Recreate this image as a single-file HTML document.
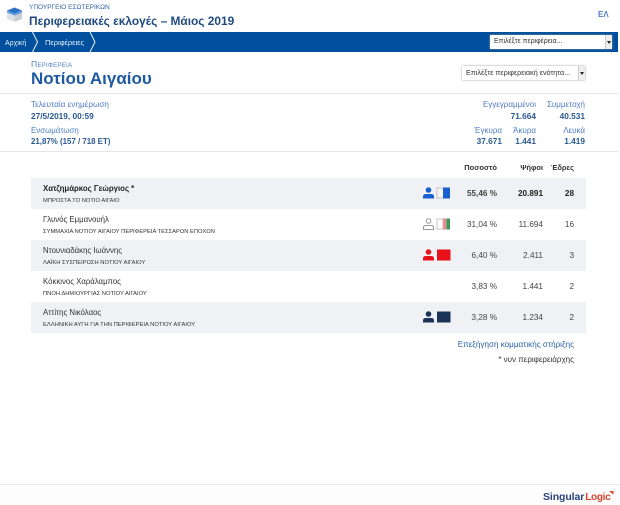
<!DOCTYPE html>
<html lang="el">
<head>
<meta charset="utf-8">
<style>
html,body{margin:0;padding:0;background:#fff}
body{width:620px;height:504px;position:relative;overflow:hidden;font-family:"Liberation Sans",sans-serif;color:#333}
.a{position:absolute;white-space:nowrap}
.r{text-align:right}
.lb{font-size:8.200px;line-height:11px;color:#4d7cc9}
.lr{font-size:8px;line-height:11px;color:#4d7cc9}
.vl{font-size:8.300px;line-height:11px;color:#2a5a94;font-weight:bold}
.row{position:absolute;left:31px;width:555px;height:31px}
.g{background:#f0f1f4}
.nm{position:absolute;left:12px;top:5px;font-size:7.800px;line-height:12px;color:#333;white-space:nowrap}
.pt{position:absolute;left:12px;top:19px;font-size:5.800px;line-height:8px;color:#333;white-space:nowrap}
.c{position:absolute;top:10px;font-size:8.200px;line-height:12px;text-align:right;color:#444;white-space:nowrap}
.p{right:89px}.v{right:43px}.s{right:12px}
.b{font-weight:bold;color:#222}
.h{font-size:7.500px;line-height:10px;font-weight:bold;color:#333;top:163px}
.sel{position:absolute;background:#fff;box-shadow:0 0 2px #999;font-size:7px;color:#333;box-sizing:border-box;white-space:nowrap}
.arr{position:absolute;right:0;top:0;bottom:0;width:6px;background:#eee;border-left:1px solid #ccc}
.arr:after{content:"";position:absolute;left:1px;top:50%;margin-top:-1px;border:2px solid transparent;border-top:3px solid #222;border-bottom:0}
</style>
</head>
<body>
<!-- logo -->
<svg class="a" style="left:6px;top:6px" width="17" height="17" viewBox="0 0 17 17">
<path d="M1 5 L8.500 8 V16 L1 13Z" fill="#dde0e6"/>
<path d="M16 5 L8.500 8 V16 L16 13Z" fill="#c9ced6"/>
<path d="M1 4.500 L8.500 1.500 L16 4.500 L8.500 7.500Z" fill="#2a72c4"/>
<path d="M1 4.500 L8.500 7.500 L16 4.500 V6.500 L8.500 9.500 L1 6.500Z" fill="#5b9bdc"/>
</svg>
<div class="a" style="left:29px;top:3px;font-size:6.500px;line-height:10px;color:#2f62a8">ΥΠΟΥΡΓΕΙΟ ΕΣΩΤΕΡΙΚΩΝ</div>
<div class="a" style="left:29px;top:13px;font-size:11.900px;line-height:16px;font-weight:bold;color:#1f4a80">Περιφερειακές εκλογές – Μάιος 2019</div>
<div class="a" style="left:598px;top:10px;font-size:8px;line-height:10px;font-weight:bold;color:#4d7cc9">ΕΛ</div>

<!-- nav -->
<div class="a" style="left:0;top:32px;width:618px;height:20px;background:#00509e"></div>
<div class="a" style="left:5px;top:39px;font-size:7px;line-height:9px;color:#e8f0fa">Αρχική</div>
<div class="a" style="left:45px;top:38px;font-size:7.500px;line-height:9px;color:#e8f0fa">Περιφέρειες</div>
<svg class="a" style="left:28px;top:32px" width="70" height="20" viewBox="0 0 70 20" fill="none" stroke="#e8f0fa" stroke-width="1">
<path d="M4.500 0 L9.500 10 L4.500 20"/>
<path d="M62 0 L67 10 L62 20"/>
</svg>
<div class="sel" style="left:490px;top:35px;width:122px;height:14px;line-height:14px;padding-left:4px">Επιλέξτε περιφέρεια...<span class="arr"></span></div>

<!-- region header -->
<div class="a" style="left:31px;top:59px;font-size:8.500px;line-height:10px;color:#4d7cc9;font-variant:small-caps;letter-spacing:.3px">Περιφερεια</div>
<div class="a" style="left:31px;top:68px;font-size:17px;line-height:22px;font-weight:bold;color:#1f5aa0">Νοτίου Αιγαίου</div>
<div class="sel" style="left:462px;top:66px;width:123px;height:14px;line-height:14px;padding-left:4px;font-size:7.200px">Επιλέξτε περιφερειακή ενότητα...<span class="arr"></span></div>

<div class="a" style="left:0;top:93px;width:618px;height:1px;background:#e6e6e8"></div>

<!-- stats -->
<div class="a lb" style="left:31px;top:99px">Τελευταία ενημέρωση</div>
<div class="a vl" style="left:31px;top:111px">27/5/2019, 00:59</div>
<div class="a lb" style="left:31px;top:125px;font-size:7.900px">Ενσωμάτωση</div>
<div class="a vl" style="left:31px;top:136px;font-size:7.900px">21,87% (157 / 718 ΕΤ)</div>

<div class="a lr r" style="right:84px;top:99px">Εγγεγραμμένοι</div>
<div class="a vl r" style="right:84px;top:111px">71.664</div>
<div class="a lr r" style="right:35px;top:99px">Συμμετοχή</div>
<div class="a vl r" style="right:35px;top:111px">40.531</div>
<div class="a lr r" style="right:118px;top:125px">Έγκυρα</div>
<div class="a vl r" style="right:118px;top:136px">37.671</div>
<div class="a lr r" style="right:84px;top:125px">Άκυρα</div>
<div class="a vl r" style="right:84px;top:136px">1.441</div>
<div class="a lr r" style="right:35px;top:125px">Λευκά</div>
<div class="a vl r" style="right:35px;top:136px">1.419</div>

<div class="a" style="left:0;top:151px;width:618px;height:1px;background:#e6e6e8"></div>

<!-- table head -->
<div class="a h r" style="right:123px">Ποσοστό</div>
<div class="a h r" style="right:77px">Ψήφοι</div>
<div class="a h r" style="right:46px">Έδρες</div>

<!-- rows -->
<div class="row g" style="top:178px">
<div class="nm b">Χατζημάρκος Γεώργιος *</div>
<div class="pt">ΜΠΡΟΣΤΑ ΤΟ ΝΟΤΙΟ ΑΙΓΑΙΟ</div>
<div class="c p b" style="font-weight:bold;color:#444">55,46 %</div><div class="c v b">20.891</div><div class="c s b">28</div>
</div>
<div class="row" style="top:209px">
<div class="nm">Γλυνός Εμμανουήλ</div>
<div class="pt">ΣΥΜΜΑΧΙΑ ΝΟΤΙΟΥ ΑΙΓΑΙΟΥ ΠΕΡΙΦΕΡΕΙΑ ΤΕΣΣΑΡΩΝ ΕΠΟΧΩΝ</div>
<div class="c p">31,04 %</div><div class="c v">11.694</div><div class="c s">16</div>
</div>
<div class="row g" style="top:240px">
<div class="nm">Ντουνιαδάκης Ιωάννης</div>
<div class="pt">ΛΑΪΚΗ ΣΥΣΠΕΙΡΩΣΗ ΝΟΤΙΟΥ ΑΙΓΑΙΟΥ</div>
<div class="c p">6,40 %</div><div class="c v">2.411</div><div class="c s">3</div>
</div>
<div class="row" style="top:271px">
<div class="nm">Κόκκινος Χαράλαμπος</div>
<div class="pt">ΠΝΟΗ ΔΗΜΙΟΥΡΓΙΑΣ ΝΟΤΙΟΥ ΑΙΓΑΙΟΥ</div>
<div class="c p">3,83 %</div><div class="c v">1.441</div><div class="c s">2</div>
</div>
<div class="row g" style="top:302px">
<div class="nm">Αττίτης Νικόλαος</div>
<div class="pt">ΕΛΛΗΝΙΚΗ ΑΥΓΗ ΓΙΑ ΤΗΝ ΠΕΡΙΦΕΡΕΙΑ ΝΟΤΙΟΥ ΑΙΓΑΙΟΥ</div>
<div class="c p">3,28 %</div><div class="c v">1.234</div><div class="c s">2</div>
</div>

<!-- icons -->
<svg class="a" style="left:423px;top:187px" width="30" height="12" viewBox="0 0 30 12">
<circle cx="5.500" cy="3" r="2.800" fill="#1a5fd0"/><path d="M0 11.500 V9.500 Q0 7 3 7 H8 Q11 7 11 9.500 V11.500Z" fill="#1a5fd0"/>
<rect x="14" y="1" width="6.500" height="10" fill="#f4f4f6" stroke="#c4c4c8" stroke-width="1"/><rect x="20" y=".5" width="7" height="11" fill="#1a5fd0"/>
</svg>
<svg class="a" style="left:423px;top:218px" width="30" height="12" viewBox="0 0 30 12">
<circle cx="5.500" cy="3" r="2.300" fill="none" stroke="#999" stroke-width="1"/><path d="M.5 11.500 V9.500 Q.5 7.500 3 7.500 H8 Q10.500 7.500 10.500 9.500 V11.500Z" fill="none" stroke="#999" stroke-width="1"/>
<rect x="14" y="1" width="6" height="10" fill="#fff" stroke="#c4c4c8" stroke-width="1"/><rect x="20" y=".5" width="3.500" height="11" fill="#e88f95"/><rect x="23.500" y=".5" width="3.500" height="11" fill="#3a9a5c"/>
</svg>
<svg class="a" style="left:423px;top:249px" width="30" height="12" viewBox="0 0 30 12">
<circle cx="5.500" cy="3" r="2.800" fill="#e8111a"/><path d="M0 11.500 V9.500 Q0 7 3 7 H8 Q11 7 11 9.500 V11.500Z" fill="#e8111a"/>
<rect x="14" y=".5" width="13.500" height="11" fill="#e8111a"/>
</svg>
<svg class="a" style="left:423px;top:311px" width="30" height="12" viewBox="0 0 30 12">
<circle cx="5.500" cy="3" r="2.800" fill="#1c3358"/><path d="M0 11.500 V9.500 Q0 7 3 7 H8 Q11 7 11 9.500 V11.500Z" fill="#1c3358"/>
<rect x="14" y=".5" width="13.500" height="11" fill="#1c3358"/>
</svg>

<div class="a r" style="right:46px;top:339px;font-size:8.100px;line-height:11px;color:#2a62a8">Επεξήγηση κομματικής στήριξης</div>
<div class="a r" style="right:46px;top:354px;font-size:8px;line-height:11px;color:#333">* νυν περιφερειάρχης</div>

<!-- footer -->
<div class="a" style="left:0;top:484px;width:620px;height:20px;background:#fdfdfd"></div>
<div class="a" style="left:0;top:484px;width:620px;height:1px;background:#e8e8ea"></div>
<div class="a" style="left:543px;top:490px;font-size:10.500px;line-height:14px;font-weight:bold;letter-spacing:-.1px;color:#27437e">Singular<span style="color:#d8432a;margin-left:1px;letter-spacing:-.3px;font-size:10px">Logic</span></div>
<svg class="a" style="left:609px;top:491px" width="5" height="4" viewBox="0 0 5 4"><path d="M0 0 H4.500 V3.500Z" fill="#d8432a"/></svg>
</body>
</html>
